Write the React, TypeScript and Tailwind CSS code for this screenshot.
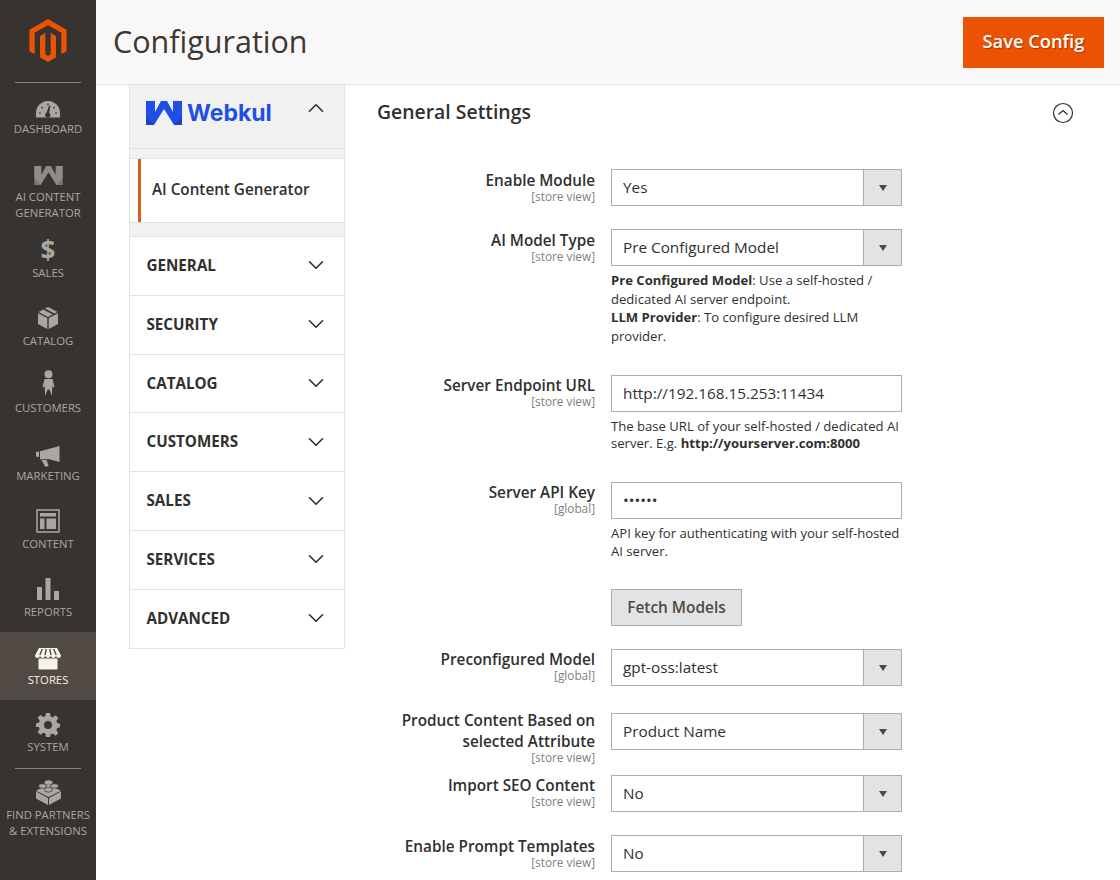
import React from 'react';
import { ChevronDown, ChevronUp } from 'lucide-react';

const FONT = "font-['Open_Sans',sans-serif]";

function DashboardIcon() {
  return (
    <svg width="24" height="17" viewBox="0 0 24 17">
      <path d="M0 16.5V12a12 12 0 0 1 24 0v4.5z" fill="currentColor" />
      <path d="M9.6 14l3.6-9.5 1.2.4-1.6 8.6z" fill="#373330" />
      <circle cx="11.8" cy="14" r="2.6" fill="#373330" />
      <path d="M3 12h2M5.5 6l1.3 1.3M12 2.6v2M18.6 6l-1.3 1.3M19 12h2" stroke="#373330" strokeWidth="1.2" />
    </svg>
  );
}

function WebkulMark({ className }: { className?: string }) {
  return (
    <svg className={className} viewBox="0 0 36 24">
      <path d="M0 0h9v11L15 0h6l6 11V0h9v24h-8L18 8 8 24H0z" fill="currentColor" />
      <path d="M0 24h8l-8-9zM36 24h-8l8-9z" fill="#000" opacity=".15" />
    </svg>
  );
}

function BoxIcon() {
  return (
    <svg width="20" height="22" viewBox="0 0 20 22" className="mb-[6px]">
      <path d="M10 0l9.5 5-3 1.6L7 1.500z" fill="currentColor" />
      <path d="M5.300 2.400l9.500 5.100-4.800 2.500L.5 5z" fill="currentColor" />
      <path d="M0 6.200l9.300 4.900V22L0 17z" fill="currentColor" />
      <path d="M20 6.200l-9.300 4.900V22L20 17z" fill="currentColor" />
    </svg>
  );
}

function PersonIcon() {
  return (
    <svg width="13" height="26" viewBox="0 0 13 26" className="mb-[10px]">
      <circle cx="6.500" cy="4.200" r="4" fill="currentColor" />
      <path d="M2.500 9h8L12.500 17l-1.600.6-.6-2.600L10 26 7.400 19.500H5.600L3 26 2.700 15l-.6 2.600L.5 17z" fill="currentColor" />
    </svg>
  );
}

function MegaphoneIcon() {
  return (
    <svg width="24" height="21" viewBox="0 0 24 21">
      <path d="M0 6l3-.5V11l-3-.5z" fill="currentColor" />
      <path d="M4 5.300L23.500 0v16L13 13.200H4z" fill="currentColor" />
      <path d="M5.500 14h5l2.200 5.800-3.400 1.200z" fill="currentColor" />
    </svg>
  );
}

function ContentIcon() {
  return (
    <svg width="24" height="24" viewBox="0 0 24 24" className="mb-[7px]">
      <path d="M1 1h22v22H1z" fill="none" stroke="currentColor" strokeWidth="1.500" />
      <path d="M4 4h16v3.500H4zM4 9.500h4.500V20H4zM10.500 9.500H20V20h-9.500z" fill="currentColor" />
    </svg>
  );
}

function ReportsIcon() {
  return (
    <svg width="22" height="22" viewBox="0 0 22 22" className="mb-[6px]">
      <path d="M0 9h5v13H0zM8.500 0h5v22h-5zM17 13h5v9h-5z" fill="currentColor" />
    </svg>
  );
}

function StoresIcon() {
  return (
    <svg width="26" height="22" viewBox="0 0 26 22" className="mb-[3px]">
      <path d="M3.500 10.500v11h19v-11z" fill="currentColor" />
      <path d="M4 0h18l4 7.500c0 1.800-1.300 2.500-2.500 2.500S21 9 21 7.500C21 9 19.800 10 18.300 10S16 9 15.600 7.500C15.300 9 14.400 10 13 10s-2.300-1-2.600-2.500C10 9 9.200 10 7.700 10S5 9 5 7.500C5 9 3.800 10 2.500 10S0 9.300 0 7.500z" fill="currentColor" />
      <path d="M7.300 1L4.800 7M11.300 1L10 7M14.700 1L16 7M18.700 1l2.500 6" stroke="#514943" strokeWidth="1.400" />
    </svg>
  );
}

function GearIcon() {
  return (
    <svg width="24" height="24" viewBox="0 0 24 24" className="mb-[4px]">
      <path
        fillRule="evenodd"
        d="M10 0h4l.6 3.500 2.100.9L19.600 2.300l2.800 2.800-2.100 2.900.9 2.100L24 10.700v3.600l-2.800.6-.9 2.100 2.100 2.900-2.800 2.800-2.900-2.100-2.100.9L14 24h-4l-.6-3.400-2.100-.9-2.900 2.100-2.800-2.800 2.100-2.900-.9-2.100L0 13.900v-3.600l2.800-.6.9-2.100-2.100-2.900 2.800-2.800 2.900 2.100 2.100-.9zM12 8a4 4 0 1 0 0 8 4 4 0 0 0 0-8z"
        fill="currentColor"
      />
    </svg>
  );
}

function BrickIcon() {
  return (
    <svg width="25" height="25" viewBox="0 0 25 25" className="mb-[6px]">
      <path d="M0 11.500l12 6.500v7L0 18.500zM25 11.500l-12 6.500v7l12-6.500z" fill="currentColor" />
      <path d="M12.500 4.500L25 10.800 12.500 17 0 10.800z" fill="currentColor" />
      <ellipse cx="12.500" cy="2.500" rx="4" ry="2.300" fill="currentColor" />
      <ellipse cx="6.500" cy="6" rx="4" ry="2.300" fill="currentColor" stroke="#373330" strokeWidth=".7" />
      <ellipse cx="18.500" cy="6" rx="4" ry="2.300" fill="currentColor" stroke="#373330" strokeWidth=".7" />
      <ellipse cx="12.500" cy="9.800" rx="4" ry="2.300" fill="currentColor" stroke="#373330" strokeWidth=".7" />
    </svg>
  );
}

function SideItem({ icon, label, h = 'h-[68px]', pt = 'pt-[16px]', active = false }: { icon: React.ReactNode; label: React.ReactNode; h?: string; pt?: string; active?: boolean }) {
  return (
    <div className={`flex flex-col items-center ${pt} ${h} ${active ? 'bg-[#514943] text-[#f7f3eb]' : 'text-[#aaa6a0]'}`}>
      <div className="flex h-[24px] items-center justify-center">{icon}</div>
      <div className="whitespace-nowrap text-center text-[11.3px] leading-[16px]">{label}</div>
    </div>
  );
}

function Sidebar() {
  return (
    <div className="w-[96px] shrink-0 bg-[#373330]">
      <div className="flex h-[81px] justify-center pt-[19px]">
        <svg width="44" height="43" viewBox="0 0 24 24">
          <path
            d="M12 24l-4.455-2.572v-12l2.970-1.715v12.001l1.485.902 1.485-.902V7.713l2.971 1.715v12L12 24zM22.391 6v12l-2.969 1.714V7.713L12 3.430 4.574 7.713v12.001L1.609 18V6L12 0l10.391 6z"
            fill="#eb5202"
          />
        </svg>
      </div>
      <div className="relative">
        <div className="absolute left-[15px] top-[1px] h-px w-[66px] bg-[#85807b]" />
      </div>
      <SideItem icon={<DashboardIcon />} label="DASHBOARD" />
      <SideItem icon={<WebkulMark className="mb-[4px] h-[19px] w-[29px] text-[#8f8c88]" />} label={<>AI CONTENT<br />GENERATOR</>} h="h-[76px]" />
      <SideItem icon={<span className="mb-[6px] text-[26px] font-bold leading-none">$</span>} label="SALES" />
      <SideItem icon={<BoxIcon />} label="CATALOG" h="h-[67px]" />
      <SideItem icon={<PersonIcon />} label="CUSTOMERS" />
      <SideItem icon={<MegaphoneIcon />} label="MARKETING" />
      <SideItem icon={<ContentIcon />} label="CONTENT" />
      <SideItem icon={<ReportsIcon />} label="REPORTS" />
      <SideItem icon={<StoresIcon />} label="STORES" active />
      <SideItem icon={<GearIcon />} label="SYSTEM" pt="pt-[15px]" />
      <div className="mx-[15px] h-px bg-[#85807b]" />
      <SideItem icon={<BrickIcon />} label={<>FIND PARTNERS<br />&amp; EXTENSIONS</>} h="h-[80px]" pt="pt-[14px]" />
    </div>
  );
}

function Nav() {
  const sections = ['GENERAL', 'SECURITY', 'CATALOG', 'CUSTOMERS', 'SALES', 'SERVICES', 'ADVANCED'];
  return (
    <div className="ml-[33px] w-[216px] shrink-0">
      <div className="flex h-[63px] items-center justify-between border-x border-[#e3e3e3] bg-[#f1f1f1] pl-[16px] pr-[15px]">
        <div className="flex items-center gap-[5px] pb-[7px] text-[#1f4fe6]">
          <WebkulMark className="h-[24px] w-[36px]" />
          <span className="font-['Inter',sans-serif] text-[23px] font-bold leading-none">Webkul</span>
        </div>
        <ChevronUp size={26} strokeWidth={1.5} className="mb-[17px] text-[#303030]" />
      </div>
      <div className="border-x border-t border-[#e3e3e3] bg-[#f1f1f1] pb-[13px] pt-[9px]">
        <div className="border-y border-[#e3e3e3] bg-white pl-[8px]">
          <div className="flex h-[63px] items-center border-l-[3px] border-[#d85c1c] pb-[2px] pl-[11px] text-[15.25px] font-semibold text-[#303030]">
            AI Content Generator
          </div>
        </div>
      </div>
      <div className="border-x border-b border-[#e3e3e3]">
        {sections.map((s) => (
          <div key={s} className="flex h-[58.8px] items-center justify-between border-t border-[#e3e3e3] pb-[1px] pl-[16.5px] pr-[15px] text-[15.2px] font-bold text-[#303030]">
            {s}
            <ChevronDown size={26} strokeWidth={1.5} />
          </div>
        ))}
      </div>
    </div>
  );
}

function Label({ text, scope, className }: { text: React.ReactNode; scope: string; className?: string }) {
  return (
    <div className={`w-[218px] shrink-0 text-right ${className ?? ''}`}>
      <div className="text-[15.3px] font-semibold leading-[21px] text-[#303030]">{text}</div>
      <div className="-mt-px text-[11.8px] leading-[12px] text-[#808080]">[{scope}]</div>
    </div>
  );
}

function SelectBox({ value }: { value: string }) {
  return (
    <div className="flex h-[37px] w-[291px] border border-[#adadad] bg-white text-[15.3px] text-[#303030]">
      <div className="flex flex-1 items-center pl-[11px]">{value}</div>
      <div className="flex w-[38px] items-center justify-center border-l border-[#adadad] bg-[#e3e3e3]">
        <div className="h-0 w-0 border-x-[4.5px] border-t-[6px] border-x-transparent border-t-[#514943]" />
      </div>
    </div>
  );
}

function Note({ children, className }: { children: React.ReactNode; className?: string }) {
  return <div className={`w-[291px] text-[13.1px] text-[#303030] ${className ?? ''}`}>{children}</div>;
}

function Row({ label, scope, children, className, labelClass }: { label: React.ReactNode; scope: string; children: React.ReactNode; className?: string; labelClass?: string }) {
  return (
    <div className={`flex gap-[16px] ${className ?? ''}`}>
      <Label text={label} scope={scope} className={labelClass} />
      <div>{children}</div>
    </div>
  );
}

function TextField({ value, type = 'text' }: { value: string; type?: string }) {
  return (
    <input
      readOnly
      type={type}
      value={value}
      className="block h-[37px] w-[291px] border border-[#adadad] bg-white pb-[2px] pl-[11px] text-[15.3px] text-[#303030]"
    />
  );
}

function Settings() {
  return (
    <div className="ml-[32px] flex-1">
      <div className="flex items-center justify-between pr-[46px] pt-[13px]">
        <div className="text-[19.4px] font-semibold leading-[28px] text-[#303030]">General Settings</div>
        <svg width="22" height="22" viewBox="0 0 22 22" fill="none" stroke="#303030" strokeWidth="1.200" className="mt-[2px]">
          <circle cx="11" cy="11" r="9.500" />
          <path d="M6.500 12.500L11 8.500l4.500 4" strokeWidth="1.300" />
        </svg>
      </div>
      <Row label="Enable Module" scope="store view" className="mt-[43px]" labelClass="pt-px">
        <SelectBox value="Yes" />
      </Row>
      <Row label="AI Model Type" scope="store view" className="mt-[23px]" labelClass="pt-px">
        <SelectBox value="Pre Configured Model" />
        <Note className="mt-[5px] leading-[18.5px]">
          <b className="font-bold">Pre Configured Model</b>: Use a self-hosted / dedicated AI server endpoint.<br />
          <b className="font-bold">LLM Provider</b>: To configure desired LLM provider.
        </Note>
      </Row>
      <Row label="Server Endpoint URL" scope="store view" className="mt-[30px]">
        <TextField value="http://192.168.15.253:11434" />
        <Note className="mt-[6px] leading-[17px]">
          The base URL of your self-hosted / dedicated AI server. E.g. <b className="font-bold">http://yourserver.com:8000</b>
        </Note>
      </Row>
      <Row label="Server API Key" scope="global" className="mt-[30px]">
        <TextField value="secret" type="password" />
        <Note className="mt-[5px] leading-[18px]">API key for authenticating with your self-hosted AI server.</Note>
      </Row>
      <div className="ml-[234px] mt-[29px]">
        <button className="h-[37px] w-[131px] border border-[#adadad] bg-[#e3e3e3] text-[15.4px] font-semibold text-[#514943]">Fetch Models</button>
      </div>
      <Row label="Preconfigured Model" scope="global" className="mt-[23px]">
        <SelectBox value="gpt-oss:latest" />
      </Row>
      <Row label={<>Product Content Based on<br />selected Attribute</>} scope="store view" className="mt-[27px]" labelClass="-mt-[3px]">
        <SelectBox value="Product Name" />
      </Row>
      <Row label="Import SEO Content" scope="store view" className="mt-[12px]">
        <SelectBox value="No" />
      </Row>
      <Row label="Enable Prompt Templates" scope="store view" className="mt-[23px]" labelClass="pt-px">
        <SelectBox value="No" />
      </Row>
    </div>
  );
}

export default function App() {
  return (
    <div className={`flex h-[880px] w-[1120px] overflow-hidden bg-white ${FONT}`}>
      <Sidebar />
      <div className="flex min-w-0 flex-1 flex-col">
        <div className="flex h-[85px] shrink-0 items-start justify-between border-b border-[#e3e3e3] bg-[#f8f8f8] pl-[17px] pr-[16px]">
          <h1 className="mt-[19px] text-[30.5px] font-normal leading-[44px] text-[#41362f]">Configuration</h1>
          <button className="mt-[17px] h-[51px] w-[141px] bg-[#eb5202] pb-[4px] text-[18.3px] font-semibold text-white [text-shadow:1px_1px_1px_rgba(0,0,0,0.3)]">Save Config</button>
        </div>
        <div className="flex">
          <Nav />
          <Settings />
        </div>
      </div>
    </div>
  );
}
